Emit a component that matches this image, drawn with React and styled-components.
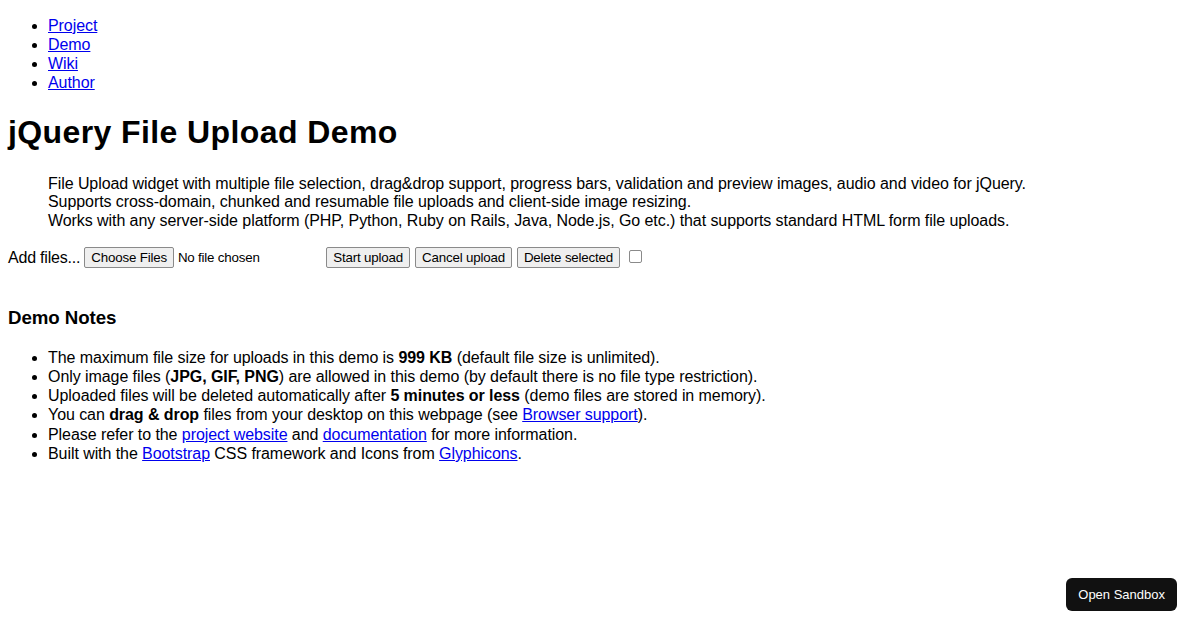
import React from "react";
import styled, { createGlobalStyle } from "styled-components";

const GlobalStyle = createGlobalStyle`
  html, body { margin: 0; padding: 0; background: #fff; }
  body {
    padding: 0 8px;
    font-family: "Liberation Sans", Arial, sans-serif;
    font-size: 16px;
    line-height: 19.2px;
    letter-spacing: -0.07px;
    color: #000;
  }
`;

const Page = styled.div`
  padding-top: 16px;
`;

const NavList = styled.ul`
  margin: 0 0 16px;
  padding-left: 40px;
  list-style: disc;
  line-height: 19px;
`;

const Link = styled.a`
  color: #0000ee;
  text-decoration: underline;
  cursor: pointer;
`;

const Title = styled.h1`
  font-size: 32px;
  line-height: 38px;
  letter-spacing: 0.4px;
  font-weight: bold;
  margin: 21.44px 0 23.5px;
`;

const Lead = styled.blockquote`
  margin: 16px 40px 14px;
  line-height: 18.5px;
  p { margin: 0; }
`;

const UploadForm = styled.form`
  margin: 0;
  padding: 3px 0 20px;
`;

const ButtonBar = styled.div`
  display: flex;
  align-items: center;
  height: 21px;
`;

const Label = styled.span`
  margin-right: 4px;
  letter-spacing: -0.2px;
`;

const FilePicker = styled.span`
  display: inline-flex;
  align-items: center;
  width: 238px;
  margin-right: 4px;
  font-size: 13.33px;
  letter-spacing: -0.2px;
`;

const Button = styled.button`
  font-family: "Liberation Sans", Arial, sans-serif;
  font-size: 13.33px;
  letter-spacing: -0.18px;
  color: #000;
  background: #efefef;
  border: 1px solid #8a8a8a;
  border-radius: 2px;
  padding: 1px 6px;
  height: 21px;
  line-height: 17px;
  margin-right: ${(p) => (p.$gap ? `${p.$gap}px` : "0")};
  cursor: default;
`;

const NoFile = styled.span`
  margin-left: 4px;
`;

const Check = styled.input`
  appearance: none;
  width: 13px;
  height: 13px;
  margin: 0 0 3px 9px;
  border: 1px solid #8a8a8a;
  border-radius: 2px;
  background: #fff;
  box-sizing: border-box;
`;

const NotesTitle = styled.h3`
  font-size: 18.72px;
  line-height: 22px;
  font-weight: bold;
  margin: 18.72px 0;
`;

const NotesList = styled.ul`
  margin: 16px 0;
  padding-left: 40px;
  list-style: disc;
`;

const SandboxButton = styled.button`
  position: fixed;
  right: 23px;
  bottom: 19px;
  height: 33px;
  padding: 0 12px;
  background: #111;
  color: #fff;
  border: none;
  border-radius: 6px;
  font-family: "Liberation Sans", Arial, sans-serif;
  font-size: 13px;
  letter-spacing: 0;
  cursor: pointer;
`;

export default function App() {
  return (
    <Page>
      <GlobalStyle />
      <NavList>
        <li><Link>Project</Link></li>
        <li><Link>Demo</Link></li>
        <li><Link>Wiki</Link></li>
        <li><Link>Author</Link></li>
      </NavList>
      <Title>jQuery File Upload Demo</Title>
      <Lead>
        <p>
          File Upload widget with multiple file selection, drag&amp;drop support, progress bars, validation and preview images, audio and video for jQuery.
          <br />
          Supports cross-domain, chunked and resumable file uploads and client-side image resizing.
          <br />
          Works with any server-side platform (PHP, Python, Ruby on Rails, Java, Node.js, Go etc.) that supports standard HTML form file uploads.
        </p>
      </Lead>
      <UploadForm onSubmit={(e) => e.preventDefault()}>
        <ButtonBar>
          <Label>Add files...</Label>
          <FilePicker>
            <Button type="button">Choose Files</Button>
            <NoFile>No file chosen</NoFile>
          </FilePicker>
          <Button type="button" $gap={5}>Start upload</Button>
          <Button type="button" $gap={5}>Cancel upload</Button>
          <Button type="button">Delete selected</Button>
          <Check type="checkbox" />
        </ButtonBar>
      </UploadForm>
      <NotesTitle>Demo Notes</NotesTitle>
      <NotesList>
        <li>The maximum file size for uploads in this demo is <strong>999 KB</strong> (default file size is unlimited).</li>
        <li>Only image files (<strong>JPG, GIF, PNG</strong>) are allowed in this demo (by default there is no file type restriction).</li>
        <li>Uploaded files will be deleted automatically after <strong>5 minutes or less</strong> (demo files are stored in memory).</li>
        <li>You can <strong>drag &amp; drop</strong> files from your desktop on this webpage (see <Link>Browser support</Link>).</li>
        <li>Please refer to the <Link>project website</Link> and <Link>documentation</Link> for more information.</li>
        <li>Built with the <Link>Bootstrap</Link> CSS framework and Icons from <Link>Glyphicons</Link>.</li>
      </NotesList>
      <SandboxButton type="button">Open Sandbox</SandboxButton>
    </Page>
  );
}
